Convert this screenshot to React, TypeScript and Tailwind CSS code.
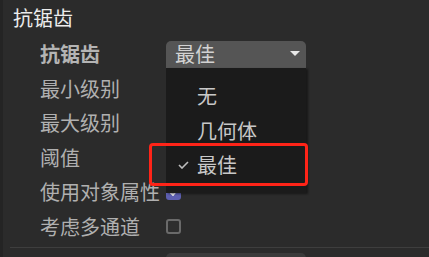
import React from 'react';

const font = { fontFamily: '"Noto Sans CJK SC", "Noto Sans", sans-serif' };

const rows = ['最小级别', '最大级别', '阈值', '使用对象属性', '考虑多通道'];

export default function App() {
  return (
    <div className="w-[429px] h-[257px] bg-[#2b2b2b] flex overflow-hidden" style={font}>
      <div className="w-[3px] bg-[#242424] shrink-0" />
      <div className="flex-1 flex flex-col relative">
        {/* section header */}
        <div className="shrink-0 h-[37px] pl-[10px] pt-[4px] text-[20px] leading-[28px] text-[#ececec]">抗锯齿</div>

        {/* dropdown row */}
        <div className="shrink-0 h-[34.5px] flex items-center">
          <div className="w-[163px] pl-[37px] text-[20px] font-bold text-[#b4b4b4] leading-none">抗锯齿</div>
          <div className="relative">
            <div className="w-[140px] h-[27px] bg-[#555555] rounded-t-[5px] flex items-center justify-between pl-[9px] pr-[6px]">
              <span className="text-[20px] leading-none text-[#d2d2d2]">最佳</span>
              <svg width="10" height="6" viewBox="0 0 10 6">
                <path d="M0 0 L10 0 L5 5 Z" fill="#e8e8e8" />
              </svg>
            </div>
            {/* open menu */}
            <div className="absolute z-10 left-0 top-[27px] w-[140px] h-[125px] bg-[#1b1b1b] shadow-[2px_1px_2px_rgba(0,0,0,0.45)] pt-[11px]">
              {['无', '几何体', '最佳'].map((item, i) => (
                <div key={item} className="h-[34.5px] flex items-center text-[20px] leading-none text-[#c8c8c8]">
                  <span className="w-[31px] flex justify-end pr-[8px]">
                    {i === 2 && (
                      <svg width="11" height="8" viewBox="0 0 11 8">
                        <path d="M1 4 L4 7 L10 1" stroke="#bdbdbd" strokeWidth="1.6" fill="none" />
                      </svg>
                    )}
                  </span>
                  {item}
                </div>
              ))}
            </div>
          </div>
        </div>

        {rows.map((label, i) => (
          <div key={label} className="shrink-0 h-[34.5px] flex items-center">
            <div className="w-[163px] pl-[37px] text-[20px] text-[#b0b0b0] leading-none">{label}</div>
            {i === 3 && (
              <div className="w-[15px] h-[15px] rounded-[3px] bg-[#5d5fb0] flex items-center justify-center">
                <svg width="10" height="8" viewBox="0 0 10 8">
                  <path d="M1 4 L4 7 L9 1" stroke="#f0f0f0" strokeWidth="1.8" fill="none" />
                </svg>
              </div>
            )}
            {i === 4 && <div className="w-[15px] h-[15px] rounded-[3px] border-2 border-[#6a6a6a] bg-[#2e2e2e]" />}
          </div>
        ))}

        <div className="shrink-0 mt-[3px] ml-[7px] h-px bg-[#3e3e3e]" />
        <div className="shrink-0 mt-[5px] ml-[163px] w-[140px] h-[10px] rounded-t-[5px] bg-[#3b3b3b]" />

        {/* highlight annotation */}
        <div className="absolute z-20 left-[146px] top-[143px] w-[159px] h-[43px] border-[3.5px] border-[#ff2418] rounded-[4px]" />
      </div>
    </div>
  );
}
